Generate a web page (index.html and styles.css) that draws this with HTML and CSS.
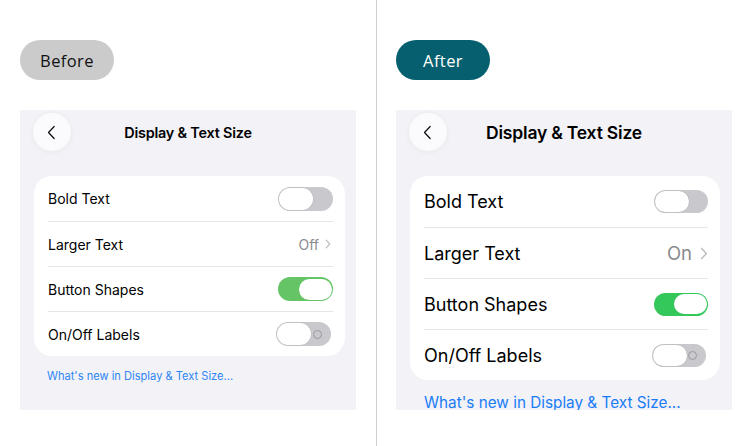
FILE: index.html
```html
<!DOCTYPE html>
<html lang="en">
<head>
<meta charset="utf-8">
<title>Display & Text Size – Before / After</title>
<link rel="stylesheet" href="styles.css">
</head>
<body>
<div class="compare">
  <section class="half">
    <div class="pill pill-before">Before</div>
    <div class="phone small">
      <div class="nav">
        <div class="back"><svg viewBox="0 0 12 20" width="9" height="15"><path d="M9.5 2 L2 10 L9.5 18" fill="none" stroke="#111" stroke-width="1.7" stroke-linecap="round" stroke-linejoin="round"/></svg></div>
        <div class="title">Display &amp; Text Size</div>
        <div></div>
      </div>
      <div class="card">
        <div class="row"><span class="label">Bold Text</span><span class="toggle"></span></div>
        <div class="row"><span class="label">Larger Text</span><span class="value">Off<svg class="chev" viewBox="0 0 8 14" width="6" height="10"><path d="M1.5 1.5 L6.5 7 L1.5 12.5" fill="none" stroke="#bdbdc2" stroke-width="1.6" stroke-linecap="round" stroke-linejoin="round"/></svg></span></div>
        <div class="row"><span class="label">Button Shapes</span><span class="toggle on"></span></div>
        <div class="row"><span class="label">On/Off Labels</span><span class="toggle labels"><i class="ring"></i></span></div>
      </div>
      <div class="link">What's new in Display &amp; Text Size...</div>
    </div>
  </section>
  <section class="half right">
    <div class="pill pill-after">After</div>
    <div class="phone large">
      <div class="nav">
        <div class="back"><svg viewBox="0 0 12 20" width="9" height="15"><path d="M9.5 2 L2 10 L9.5 18" fill="none" stroke="#111" stroke-width="1.7" stroke-linecap="round" stroke-linejoin="round"/></svg></div>
        <div class="title">Display &amp; Text Size</div>
        <div></div>
      </div>
      <div class="card">
        <div class="row"><span class="label">Bold Text</span><span class="toggle"></span></div>
        <div class="row"><span class="label">Larger Text</span><span class="value">On<svg class="chev" viewBox="0 0 8 14" width="8" height="13"><path d="M1.5 1.5 L6.5 7 L1.5 12.5" fill="none" stroke="#bdbdc2" stroke-width="1.6" stroke-linecap="round" stroke-linejoin="round"/></svg></span></div>
        <div class="row"><span class="label">Button Shapes</span><span class="toggle on"></span></div>
        <div class="row"><span class="label">On/Off Labels</span><span class="toggle labels"><i class="ring"></i></span></div>
      </div>
      <div class="link">What's new in Display &amp; Text Size...</div>
    </div>
  </section>
</div>
</body>
</html>
```
FILE: styles.css
```css
* { box-sizing: border-box; }
html, body { margin: 0; padding: 0; background: #fff; }
body {
  width: 752px;
  height: 446px;
  overflow: hidden;
  font-family: Inter, "Noto Sans", "Liberation Sans", sans-serif;
  color: #000;
}
.compare {
  display: flex;
  height: 446px;
}
.half {
  width: 376px;
  padding: 40px 20px 0 20px;
  display: flex;
  flex-direction: column;
}
.half.right {
  border-left: 1px solid #cfcfcf;
  padding-left: 19px;
}
.pill {
  width: 94px;
  height: 40px;
  border-radius: 20px;
  display: flex;
  align-items: center;
  justify-content: center;
  font-family: "Open Sans", Inter, sans-serif;
  font-size: 16.5px;
  font-weight: 500;
  letter-spacing: 0.4px;
}
.pill-before { background: #cbcbcb; color: #111; }
.pill-after { background: #065f6f; color: #fff; }

.phone {
  margin-top: 30px;
  width: 336px;
  height: 300px;
  background: #f2f2f7;
  overflow: hidden;
  padding-top: 3px;
}
.nav {
  display: grid;
  grid-template-columns: 1fr auto 1fr;
  align-items: center;
  height: 38px;
}
.back {
  width: 38px;
  height: 38px;
  border-radius: 50%;
  background: #fbfbfd;
  box-shadow: 0 1px 6px rgba(0,0,0,0.05);
  margin-left: 13px;
  display: flex;
  align-items: center;
  justify-content: center;
}
.back svg { margin-left: -2px; }
.title { font-weight: 600; letter-spacing: -0.2px; }
.small .title { font-size: 14.4px; }
.large .title { font-size: 17.5px; }

.card {
  margin: 25px 11px 0 14px;
  background: #fff;
  border-radius: 18px;
  padding: 0 12px 0 14px;
}
.large .card { margin-right: 12px; }
.row {
  display: flex;
  align-items: center;
  justify-content: space-between;
  border-top: 1px solid #e6e6ea;
}
.row:first-child { border-top: none; }
.small .row { height: 45px; }
.large .row { height: 51px; }
.small .label { font-size: 14px; }
.large .label { font-size: 18px; }
.value {
  color: #8a8a8e;
  display: flex;
  align-items: center;
  gap: 6px;
}
.small .value { font-size: 14px; margin-right: 2px; }
.large .value { font-size: 18.5px; gap: 8px; }

.toggle {
  position: relative;
  width: 55px;
  height: 24px;
  border-radius: 12px;
  background: #c9c9cd;
  flex: none;
}
.large .toggle { width: 54px; height: 23px; }
.toggle::after {
  content: "";
  position: absolute;
  top: 1px;
  left: 1px;
  width: 34px;
  height: calc(100% - 2px);
  border-radius: 12px;
  background: #fff;
  box-shadow: 0 0 0 0.5px rgba(0,0,0,0.08);
}
.toggle.on { background: #64c466; }
.large .toggle.on { background: #34c759; }
.toggle.on::after { left: auto; right: 1.5px; width: 33px; top: 1.5px; height: calc(100% - 3px); box-shadow: none; }
.toggle.labels { margin-right: 2px; }
.ring {
  position: absolute;
  right: 9px;
  top: 50%;
  width: 9px;
  height: 9px;
  margin-top: -4.5px;
  border-radius: 50%;
  border: 1px solid #9a9a9e;
}

.link {
  color: #2f86f4;
}
.small .link { font-size: 11.1px; margin: 13px 0 0 27px; }
.large .link { font-size: 15.3px; color: #1a7cf5; margin: 13px 0 0 28px; }
```
